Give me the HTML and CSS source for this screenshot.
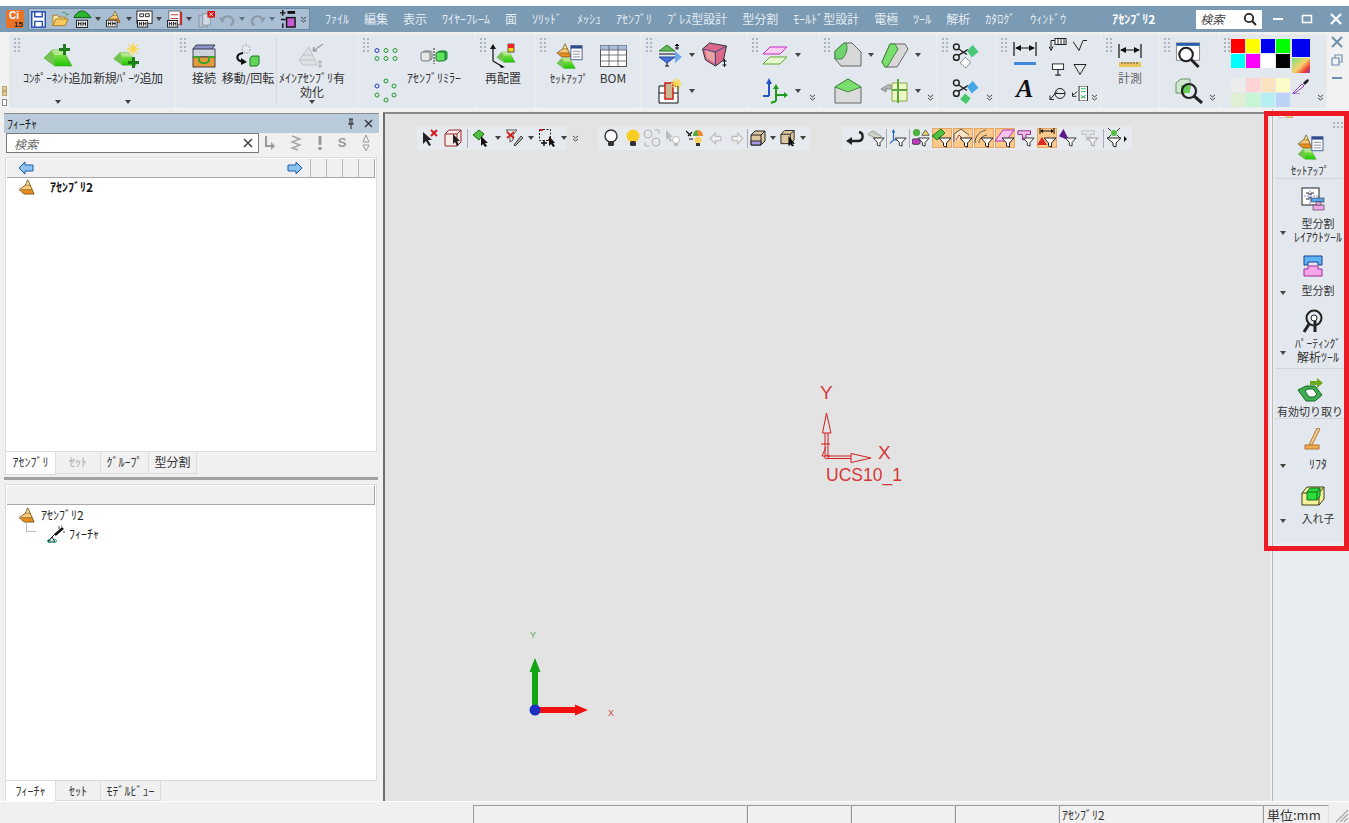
FILE: index.html
```html
<!DOCTYPE html>
<html lang="ja">
<head>
<meta charset="utf-8">
<title>アセンブリ2</title>
<link rel="stylesheet" href="styles.css">
</head>
<body>
<svg class="defs" aria-hidden="true">
<defs>
<linearGradient id="gg" x1="0" y1="0" x2="0" y2="1"><stop offset="0" stop-color="#a6e46c"/><stop offset="1" stop-color="#1fc800"/></linearGradient>
<symbol id="gem" viewBox="0 0 30 20"><path d="M1 11 9 3h11l9 16H12z" fill="url(#gg)" stroke="#3f9a2c" stroke-width=".6"/><path d="M1 11 9 3l3 16z" fill="#74c254"/><path d="M9 3h11l3 5H12z" fill="#b5e58c"/></symbol>
<symbol id="pyr" viewBox="0 0 20 18"><path d="M11 1 14 7H8z" fill="#f7ea9a"/><path d="M8 7h6l2 5H2z" fill="#f9c873"/><path d="M2 12h14l2 5H7z" fill="#e88c1e"/><path d="M11 1 18 17H7L1 12l7-5z" fill="none" stroke="#6d4c12" stroke-width=".9"/><path d="M8 7h6M3 12h13" stroke="#6d4c12" stroke-width=".7"/></symbol>
<symbol id="star" viewBox="0 0 12 12"><path d="M6 0v12M0 6h12M1.800 1.800l8.400 8.400M10.200 1.800l-8.400 8.400" stroke="#f8d848" stroke-width="1.500"/></symbol>
<symbol id="hh" viewBox="0 0 12 8"><rect x=".5" y=".5" width="11" height="7" fill="#fff" stroke="#111"/><path d="M2.500 2v4M5 2v4M2.500 4H5M7 2v4M9.500 2v4M7 4h2.500" stroke="#111"/></symbol>
<symbol id="comp" viewBox="0 0 30 24"><use href="#gem" x="0" y="3" width="30" height="20"/><path d="M20 0h3v4h4v3h-4v4h-3V7h-4V4h4z" fill="#1d7d1d"/></symbol>
<symbol id="newp" viewBox="0 0 30 26"><use href="#gem" x="0" y="7" width="24" height="16"/><use href="#star" x="14" y="0" width="12" height="12"/><path d="M19 14h3v4h4v3h-4v4h-3v-4h-4v-3h4z" fill="#1d7d1d"/></symbol>
<symbol id="conn" viewBox="0 0 24 24"><path d="M1 5 4 1h19l-3 4" fill="#8b93c8" stroke="#223" stroke-width=".8"/><rect x="1" y="5" width="22" height="8" fill="#cdd2df" stroke="#223" stroke-width=".8"/><rect x="1" y="13" width="22" height="10" fill="#e79a3b" stroke="#223" stroke-width=".8"/><path d="M1 13h6v3c0 3 3 3 5 3s5 0 5-3v-3h6" fill="none" stroke="#39a32a" stroke-width="2"/></symbol>
<symbol id="move" viewBox="0 0 26 24"><circle cx="11" cy="5" r="4" fill="none" stroke="#999" stroke-dasharray="2 1.500"/><path d="M8 9C1 10 0 16 8 18" fill="none" stroke="#111" stroke-width="2.200"/><path d="M6 14l6 4-6 3z" fill="#111"/><path d="M15 14l2-2h7v8l-2 2h-7z" fill="#62d65a" stroke="#1c7a1c"/></symbol>
<symbol id="mainasm" viewBox="0 0 26 26"><path d="M10 4 18 22H4L0 17z" fill="#dde1e6" stroke="#bcc2c8"/><path d="M3 12h11M1 17h15" stroke="#bcc2c8"/><path d="M14 8 24 1M14 8l1-4M14 8l4 0" stroke="#9aa0a6" stroke-width="1.500" fill="none"/><path d="M21 17v8M19 19h4M19 23h4" stroke="#aaa"/></symbol>
<symbol id="cir1" viewBox="0 0 24 14"><g fill="none" stroke="#1f9a2f" stroke-width="1"><circle cx="12" cy="3" r="2"/><circle cx="21" cy="3" r="2"/><circle cx="12" cy="11" r="2"/><circle cx="21" cy="11" r="2"/><circle cx="3" cy="11" r="2"/></g><circle cx="3" cy="3" r="2" fill="none" stroke="#2235c4"/></symbol>
<symbol id="cir2" viewBox="0 0 24 26"><g fill="none" stroke="#1f9a2f"><circle cx="12" cy="3" r="2"/><circle cx="20" cy="8" r="2"/><circle cx="20" cy="17" r="2"/><circle cx="12" cy="22" r="2"/><circle cx="3" cy="17" r="2"/></g><circle cx="3" cy="8" r="2" fill="none" stroke="#2235c4"/></symbol>
<symbol id="mirror" viewBox="0 0 28 16"><rect x="3" y="3" width="9" height="9" rx="2" fill="#d8d8d8" stroke="#777"/><rect x="1" y="4" width="9" height="9" rx="2" fill="#e6e6e6" stroke="#777"/><path d="M14 0v16" stroke="#333" stroke-dasharray="2 1"/><rect x="18" y="3" width="9" height="9" rx="2" fill="#2fbf45" stroke="#197a29"/><rect x="16" y="4" width="9" height="9" rx="2" fill="#62e060" stroke="#197a29"/></symbol>
<symbol id="repos" viewBox="0 0 26 24"><path d="M3 17V3M3 17l10 6" stroke="#111" stroke-width="1.200"/><path d="M0 5l3-5 3 5zM9 20l6 3-4 1z" fill="#111"/><use href="#gem" x="6" y="6" width="20" height="13"/><rect x="18" y="0" width="6" height="8" fill="#f4d322" stroke="#222" stroke-width=".7"/><rect x="18" y="0" width="6" height="4" fill="#e22"/></symbol>
<symbol id="setup" viewBox="0 0 30 28"><use href="#pyr" x="0" y="0" width="20" height="16"/><use href="#gem" x="0" y="14" width="24" height="14"/><rect x="17" y="3" width="12" height="15" fill="#fff" stroke="#3c5a8c"/><rect x="17" y="3" width="12" height="3" fill="#2d4a8a"/><path d="M19 9h8M19 12h8M19 15h8" stroke="#889"/></symbol>
<symbol id="bom" viewBox="0 0 27 22"><rect x=".5" y=".5" width="26" height="21" fill="#fff" stroke="#555"/><rect x=".5" y=".5" width="26" height="4.500" fill="#a9bde0"/><path d="M.5 5h26M.5 10h26M.5 16h26M9 .5v21M18 .5v21" stroke="#555" stroke-width=".8"/></symbol>
<symbol id="split" viewBox="0 0 26 26"><path d="M2 9 10 3l8 6z" fill="#63b856" stroke="#2e7d32"/><path d="M2 15 10 21l8-6z" fill="#3f6fd8" stroke="#2a4ca0"/><path d="M2 12h16" stroke="#111"/><path d="M20 2v6M18 4l2-2 2 2M18 6h4M10 21v3M8 24h4" stroke="#111"/><path d="M18 9l7 6-7 6z" fill="#6fa6ee"/></symbol>
<symbol id="cavity" viewBox="0 0 26 26"><path d="M1 7 8 1l17 3-3 14-8 6L4 18z" fill="#d9688b" stroke="#333"/><path d="M1 7l13 3 11-6M14 10l0 14" stroke="#36507e" fill="none"/><path d="M4 8l9 3 0 10L5 16z" fill="#e9a1a1"/><path d="M23 17v8M21 19h4M21 23h4" stroke="#111"/></symbol>
<symbol id="insert" viewBox="0 0 24 26"><path d="M1 8h19v17H1zM1 15h19" fill="#fff" stroke="#111"/><rect x="7" y="5" width="8" height="16" fill="#c9b792" stroke="#d01818" stroke-width="1.500"/><use href="#star" x="13" y="0" width="11" height="11"/></symbol>
<symbol id="planes" viewBox="0 0 26 20"><path d="M1 9l7-7h17l-7 7z" fill="#fbd0f4" stroke="#c22ac2"/><path d="M1 19l7-7h17l-7 7z" fill="#e7f6d0" stroke="#5fae2e"/></symbol>
<symbol id="axes" viewBox="0 0 26 26"><path d="M7 18V3M7 18H1" stroke="#1f55c4" stroke-width="2"/><path d="M4 6l3-6 3 6z" fill="#1f55c4"/><path d="M14 23V9M14 17h10M14 23l-5 2" stroke="#1e9a1e" stroke-width="2"/><path d="M11 11l3-5 3 5zM22 14l4 3-4 3z" fill="#1e9a1e"/></symbol>
<symbol id="f1" viewBox="0 0 28 26"><path d="M10 1h8l9 9v14H7L1 17V9z" fill="#d8d8d8" stroke="#666"/><path d="M1 17V9l9-8h2c3 6-1 13-4 16z" fill="#72d272" stroke="#3d8a3d"/></symbol>
<symbol id="f2" viewBox="0 0 28 26"><path d="M9 2h15l3 5-11 18H4L1 20z" fill="#d8d8d8" stroke="#666"/><path d="M9 2h5l3 5L6 25H4L1 20z" fill="#7ade6e" stroke="#3d8a3d"/></symbol>
<symbol id="f3" viewBox="0 0 28 26"><path d="M14 1 27 9v16H1V9z" fill="#dcdcdc" stroke="#666"/><path d="M14 1 27 9l-13 5L1 9z" fill="#7ade6e" stroke="#3d8a3d"/></symbol>
<symbol id="f4" viewBox="0 0 28 26"><path d="M0 11h10V7l-4 0M0 11l5-3v6z" fill="#bbb" stroke="#888"/><path d="M11 5h15v18H11z" fill="#eef7c8" stroke="#8aa83a"/><path d="M17 1v24M11 12h15" stroke="#5aa83a" stroke-width="2"/></symbol>
<symbol id="sc1" viewBox="0 0 27 27"><circle cx="4" cy="5" r="3" fill="none" stroke="#222" stroke-width="1.500"/><circle cx="4" cy="16" r="3" fill="none" stroke="#222" stroke-width="1.500"/><path d="M6 7l9 6M6 14l10-6" stroke="#222" stroke-width="1.500"/><path d="M15 9l6-6 6 7-7 6z" fill="#48c878"/><path d="M13 16l6 5-5 6-6-5z" fill="#fff" stroke="#555" stroke-dasharray="2 1"/></symbol>
<symbol id="sc2" viewBox="0 0 27 27"><circle cx="4" cy="5" r="3" fill="none" stroke="#222" stroke-width="1.500"/><circle cx="4" cy="16" r="3" fill="none" stroke="#222" stroke-width="1.500"/><path d="M6 7l9 6M6 14l10-6" stroke="#222" stroke-width="1.500"/><path d="M15 9l6-6 6 7-7 6z" fill="#44a8e8"/><path d="M13 16l6 5-5 6-6-5z" fill="#46c86c"/></symbol>
<symbol id="dim" viewBox="0 0 24 24"><path d="M1 0v14M23 0v14M3 6h18" stroke="#111" stroke-width="1.200"/><path d="M2 6l6-3v6zM22 6l-6-3v6z" fill="#111"/><rect x="1" y="20" width="22" height="3" fill="#3d8bd8"/></symbol>
<symbol id="dimr" viewBox="0 0 24 24"><path d="M1 0v14M23 0v14M3 6h18" stroke="#111" stroke-width="1.200"/><path d="M2 6l6-3v6zM22 6l-6-3v6z" fill="#111"/><rect x="1" y="18" width="22" height="5" fill="#e9c55c"/><path d="M4 18v2M7 18v2M10 18v2M13 18v2M16 18v2M19 18v2" stroke="#555"/></symbol>
<symbol id="s1" viewBox="0 0 18 14"><path d="M6 2H2v8M0 8l2 4 2-4" fill="none" stroke="#222"/><rect x="6" y="0" width="11" height="6" fill="#fff" stroke="#222"/><path d="M9 0v6M12 0v6M15 0v6" stroke="#222"/></symbol>
<symbol id="s2" viewBox="0 0 14 12"><path d="M0 2l6 9 4-10h4" fill="none" stroke="#222"/></symbol>
<symbol id="s3" viewBox="0 0 14 14"><rect x="1" y="1" width="12" height="6" fill="#fff" stroke="#222"/><path d="M7 7v6M4 13h6" stroke="#222" stroke-width="1.200"/></symbol>
<symbol id="s4" viewBox="0 0 14 12"><path d="M1 1h12L7 11z" fill="none" stroke="#222"/></symbol>
<symbol id="s5" viewBox="0 0 18 14"><circle cx="11" cy="7" r="5" fill="none" stroke="#222"/><path d="M6 7h10M8 5 1 13M1 9v4h4" fill="none" stroke="#222"/></symbol>
<symbol id="s6" viewBox="0 0 18 16"><path d="M6 6 1 10v0M1 7v4h4" fill="none" stroke="#222"/><rect x="8" y="0" width="9" height="16" fill="#fff" stroke="#222"/><path d="M10 3h5M10 6h5M10 10l5 3M15 10l-5 3" stroke="#2a4" /></symbol>
<symbol id="mag" viewBox="0 0 26 27"><rect x="1" y="1" width="24" height="18" fill="#fff" stroke="#888"/><rect x="1" y="1" width="24" height="3" fill="#2a5fb0"/><circle cx="11" cy="13" r="7" fill="#fff" stroke="#222" stroke-width="2.200"/><path d="M16 18l8 8" stroke="#222" stroke-width="3"/></symbol>
<symbol id="mag2" viewBox="0 0 28 26"><path d="M1 5l5-4h9v10l-5 4H1z" fill="#cfe8cf" stroke="#6b8f6b"/><rect x="6" y="7" width="9" height="8" fill="#66cc55"/><circle cx="14" cy="13" r="7" fill="none" stroke="#222" stroke-width="2.200"/><path d="M19 18l8 7" stroke="#222" stroke-width="3"/></symbol>
<symbol id="drop" viewBox="0 0 18 16"><path d="M1 15l9-9 2 2-9 7z" fill="#fff" stroke="#8a3cc8"/><path d="M11 5l3-3c2-2 4 0 2 2l-3 3z" fill="#222"/><path d="M0 16h8" stroke="#8a3cc8"/></symbol>
<symbol id="dbl" viewBox="0 0 7 7"><path d="M1 1l2.500 2 2.500-2M1 4l2.500 2 2.500-2" fill="none" stroke="#444"/></symbol>
<symbol id="save" viewBox="0 0 16 18"><rect x=".8" y=".8" width="14.400" height="16.400" fill="#fff" stroke="#2850b4" stroke-width="1.600"/><path d="M4 1v5h8V1M4 17v-6h8v6" fill="none" stroke="#2850b4" stroke-width="1.500"/></symbol>
<symbol id="open" viewBox="0 0 18 16"><path d="M1 15V4h5l1 2h7v2" fill="#f7e7a0" stroke="#a87b1e"/><path d="M1 15l3-7h13l-3 7z" fill="#f4cb5c" stroke="#a87b1e"/><path d="M11 1c3 0 4 1 5 3l1-2" fill="none" stroke="#2e9b30"/></symbol>
<symbol id="q1" viewBox="0 0 20 20"><path d="M1 8c2-5 6-7 9-7s6 3 9 7z" fill="#2fb52f" stroke="#0d5a0d"/><use href="#hh" x="3" y="10" width="13" height="9"/></symbol>
<symbol id="q2" viewBox="0 0 20 20"><use href="#pyr" x="2" y="0" width="17" height="14"/><use href="#hh" x="1" y="10" width="13" height="9"/></symbol>
<symbol id="q3" viewBox="0 0 18 20"><rect x="1" y="1" width="16" height="13" fill="#fff" stroke="#222"/><path d="M4 4h4v3H4zM10 4h4v3h-4z" fill="none" stroke="#222"/><use href="#hh" x="1" y="10" width="12" height="9"/></symbol>
<symbol id="q4" viewBox="0 0 18 20"><rect x="3" y="1" width="12" height="14" fill="#fff" stroke="#666"/><path d="M5 5h8M5 9h8" stroke="#b33"/><path d="M16 2v14" stroke="#c22" stroke-width="2"/><use href="#hh" x="1" y="10" width="12" height="9"/></symbol>
<symbol id="q5" viewBox="0 0 18 18"><rect x="1" y="5" width="9" height="12" fill="#b8c6d4" stroke="#8494a4"/><rect x="5" y="3" width="8" height="12" fill="#d0dae4" stroke="#8494a4"/><rect x="10" y="0" width="8" height="7" fill="#d11"/><path d="M12 1.500l4 4M16 1.500l-4 4" stroke="#fff"/></symbol>
<symbol id="q6" viewBox="0 0 18 14"><path d="M4 9C3 3 14 1 15 9c0 2-1 3-3 4" fill="none" stroke="#8d9bab" stroke-width="2.500"/><path d="M0 5l6 0-2 6z" fill="#8d9bab"/></symbol>
<symbol id="q7" viewBox="0 0 18 14"><path d="M14 9C15 3 4 1 3 9c0 2 1 3 3 4" fill="none" stroke="#8d9bab" stroke-width="2.500"/><path d="M18 5l-6 0 2 6z" fill="#8d9bab"/></symbol>
<symbol id="q8" viewBox="0 0 18 20"><path d="M1 3h6M4 0v6M2 10h5M4 14v5" stroke="#111" stroke-width="1.500"/><rect x="9" y="1" width="8" height="3" fill="#111"/><rect x="8" y="8" width="9" height="10" fill="#c65ad0" stroke="#111" stroke-width="1.500"/></symbol>
<symbol id="larr" viewBox="0 0 16 14"><path d="M1 7 7 1v3h8v6H7v3z" fill="#8ec3f0" stroke="#1d5aa8"/></symbol>
<symbol id="rarr" viewBox="0 0 16 14"><path d="M15 7 9 1v3H1v6h8v3z" fill="#8ec3f0" stroke="#1d5aa8"/></symbol>
<symbol id="feat" viewBox="0 0 18 18"><path d="M9 8 1 16M5 12l3 5H1z" stroke="#222" fill="none"/><circle cx="2" cy="16" r="1.500" fill="none" stroke="#2a8"/><circle cx="8" cy="16" r="1.500" fill="none" stroke="#2a8"/><path d="M8 10l8-7" stroke="#111" stroke-width="2.500"/><path d="M12 1v3M16 7h2M14 1h1" stroke="#555"/></symbol>
<symbol id="parting" viewBox="0 0 20 24"><circle cx="11" cy="9" r="7.500" fill="none" stroke="#222" stroke-width="2"/><circle cx="11" cy="9" r="3" fill="#fff" stroke="#222"/><path d="M6 15 1 23" stroke="#222" stroke-width="3"/><path d="M12 12v11" stroke="#222" stroke-width="3"/></symbol>
<symbol id="layout" viewBox="0 0 24 24"><rect x="1" y="1" width="17" height="17" fill="#fff" stroke="#222"/><path d="M9 0v18M0 9h18" stroke="#8888cc" stroke-dasharray="2 1"/><path d="M5 6h3v2M13 6h-3v2M5 12h3v-2M13 12h-3v-2" fill="none" stroke="#333"/><rect x="10" y="11" width="13" height="4" fill="#5aa2ee" stroke="#333" stroke-width=".6"/><rect x="12" y="18" width="11" height="5" fill="#f2a4e8" stroke="#333" stroke-width=".6"/><path d="M15 15h5v3h-5z" fill="#f2a4e8" stroke="#333" stroke-width=".6"/></symbol>
<symbol id="mold" viewBox="0 0 20 22"><path d="M1 1h18v9h-4V7H5v3H1z" fill="#5fb4f8" stroke="#1f3f8a"/><path d="M1 21v-7h4v-3h10v3h4v7z" fill="#f6a6ea" stroke="#a02a90"/></symbol>
<symbol id="cut" viewBox="0 0 26 24"><path d="M13 3h7V0l6 5-6 5V7h-7z" fill="#6ea81e"/><path d="M1 12 9 8h9l7 9-7 6H9z" fill="#3fae4f" stroke="#176a24"/><path d="M8 13l3-2h5l4 5-3 3h-5z" fill="#fff" stroke="#176a24"/></symbol>
<symbol id="lifter" viewBox="0 0 18 22"><path d="M5 17 13 0l3 1-8 16z" fill="#f3cd97" stroke="#b5782e"/><rect x="1" y="17" width="14" height="4" fill="#f2a94d" stroke="#b5782e"/></symbol>
<symbol id="nest" viewBox="0 0 24 22"><path d="M1 9l5-6h17v12l-5 6H1z" fill="#f8f39a" stroke="#3d3d14"/><path d="M1 9h17v12M18 9l5-6" fill="none" stroke="#3d3d14"/><path d="M6 8l3-4h10v8l-3 4H6z" fill="#2edc3a" stroke="#176a24"/><path d="M6 8h10v8M16 8l3-4" fill="none" stroke="#176a24"/></symbol>
<symbol id="cx" viewBox="0 0 18 18"><path d="M2 3v12l3-3 3 5 2-1-3-5h4z" fill="#222"/><path d="M10 1l6 6M16 1l-6 6" stroke="#d21c1c" stroke-width="2"/></symbol>
<symbol id="cb" viewBox="0 0 18 18"><path d="M1 5l4-4h12v12l-4 4H1zM1 5h12v12M13 5l4-4" fill="#f5eaea" stroke="#9a2424"/><path d="M9 5v10l2-2 2 4 2-1-2-4h3z" fill="#222"/></symbol>
<symbol id="cc" viewBox="0 0 18 18"><path d="M0 6 6 1l5 4-5 6z" fill="#4fbf3f" stroke="#216c17"/><path d="M8 7v10l2-2 2 3 2-1-2-3h3z" fill="#111"/></symbol>
<symbol id="cf" viewBox="0 0 18 18"><path d="M0 1h11L7 6v5L4 13V6z" fill="#eee" stroke="#555"/><path d="M1 3l7 6M8 3l-7 6" stroke="#d21c1c" stroke-width="1.800"/><path d="M8 16 15 7l2 2-8 8z" fill="#aaa" stroke="#444"/></symbol>
<symbol id="cs" viewBox="0 0 18 18"><rect x=".5" y=".5" width="11" height="11" fill="none" stroke="#222" stroke-dasharray="2 1.500"/><rect x="1" y="0" width="3" height="2" fill="#d21c1c"/><rect x="9" y="10" width="3" height="2" fill="#d21c1c"/><path d="M2 14h6M5 11v6" stroke="#111" stroke-width="1.500"/><path d="M10 7v10l2-2 2 3 2-1-2-3h2z" fill="#111"/></symbol>
<symbol id="b1" viewBox="0 0 16 18"><circle cx="8" cy="7" r="6" fill="#fff" stroke="#333" stroke-width="1.400"/><rect x="5" y="12" width="6" height="5" rx="1.500" fill="#333"/></symbol>
<symbol id="b2" viewBox="0 0 16 18"><circle cx="8" cy="7" r="6.500" fill="#f8cd24"/><rect x="5" y="12" width="6" height="5" rx="1.500" fill="#333"/></symbol>
<symbol id="b3" viewBox="0 0 18 18"><g fill="#e8e8e8" stroke="#b0b0b0"><circle cx="5" cy="5" r="4"/><circle cx="13" cy="13" r="4"/></g><path d="M12 1h4v4M6 17H2v-4" fill="none" stroke="#b0b0b0"/></symbol>
<symbol id="b4" viewBox="0 0 16 18"><path d="M1 1v10l2-2 2 4 2-1-2-4h3z" fill="#bcbcbc"/><circle cx="11" cy="11" r="3.500" fill="#fff" stroke="#bbb"/><rect x="9" y="14" width="4" height="3" fill="#bbb"/></symbol>
<symbol id="b5" viewBox="0 0 18 18"><path d="M7 7c0-4 3-6 5-6s5 2 5 6z" fill="#f08a2c"/><path d="M7 7c0-4 3-6 4-6l1 6z" fill="#4fb03f"/><circle cx="12" cy="11" r="3.500" fill="#f7d25c"/><rect x="10" y="14" width="4" height="3" fill="#333"/><path d="M0 2l5 5M2 7l4-4M3 10h4" stroke="#111" stroke-width="1.200"/></symbol>
<symbol id="bl" viewBox="0 0 12 12"><path d="M1 6 6 1v3h5v4H6v3z" fill="#eee" stroke="#bbb"/></symbol>
<symbol id="br" viewBox="0 0 12 12"><path d="M11 6 6 1v3H1v4h5v3z" fill="#eee" stroke="#bbb"/></symbol>
<symbol id="bx1" viewBox="0 0 16 16"><path d="M1 5l4-4h10v10l-4 4H1z" fill="#ddc79e" stroke="#222"/><path d="M1 5h10v10M11 5l4-4" fill="none" stroke="#222"/><path d="M1 11h10v4H1z" fill="#a89ae8" stroke="#222"/></symbol>
<symbol id="bx2" viewBox="0 0 17 18"><path d="M1 5l4-4h10v10l-4 4H1z" fill="#ddc79e" stroke="#222"/><path d="M1 5h10v10M11 5l4-4" fill="none" stroke="#222"/><path d="M9 7v11l2-2 2 2 2-1-2-2h3z" fill="#111"/></symbol>
<symbol id="fn" viewBox="0 0 20 20"><path d="M7 10h12l-4.500 5v4l-3 -1v-3z" fill="#fff" stroke="#222"/></symbol>
<symbol id="ret" viewBox="0 0 18 14"><path d="M5 10h7c6 0 6-8 1-9" fill="none" stroke="#222" stroke-width="2.400"/><path d="M0 10l6-4v8z" fill="#222"/></symbol>
<symbol id="t1" viewBox="0 0 20 20"><path d="M1 6l5-4 10 6-4 3z" fill="#d8d8c8" stroke="#999"/><path d="M4 3l8 4M7 2l8 5" stroke="#bbb"/><use href="#fn" width="20" height="20"/></symbol>
<symbol id="t2" viewBox="0 0 20 20"><path d="M5 12V2M5 12 1 16M5 12h5" stroke="#2a66b8" stroke-width="1.300" fill="none"/><path d="M3 4l2-4 2 4z" fill="#2a66b8"/><use href="#fn" width="20" height="20"/></symbol>
<symbol id="t3" viewBox="0 0 20 20"><circle cx="5" cy="4" r="4" fill="#4fb03f"/><path d="M11 7l4-6 4 6z" fill="#f5d35c" stroke="#555"/><rect x="0" y="11" width="9" height="6" rx="2" fill="#c23cc2" stroke="#333"/><use href="#fn" width="20" height="20"/></symbol>
<symbol id="t4" viewBox="0 0 20 20"><path d="M0 8l9-7 4 4-8 7z" fill="#4fc03f" stroke="#1f7a1f"/><use href="#fn" width="20" height="20"/></symbol>
<symbol id="t5" viewBox="0 0 20 20"><path d="M1 14V6l7-5 8 6" fill="#f8e4c0" stroke="#555"/><path d="M3 12l3-5 4 4" fill="none" stroke="#c33"/><use href="#fn" width="20" height="20"/></symbol>
<symbol id="t6" viewBox="0 0 20 20"><path d="M1 15C1 8 6 3 12 2M5 15c0-4 3-7 8-8" fill="none" stroke="#555"/><use href="#fn" width="20" height="20"/></symbol>
<symbol id="t7" viewBox="0 0 20 20"><path d="M0 13 8 2h11l-8 11z" fill="#f7c3f0" stroke="#c02ab8"/><use href="#fn" width="20" height="20"/></symbol>
<symbol id="t8" viewBox="0 0 20 20"><path d="M1 2h14v4h-5v6H6V6H1z" fill="#f0c0e8" stroke="#8a1a8a"/><use href="#fn" width="20" height="20"/></symbol>
<symbol id="t9" viewBox="0 0 20 20"><path d="M3 0v6M17 0v6M4 3h12" stroke="#111"/><path d="M3 3l3-2v4zM17 3l-3-2v4z" fill="#111"/><path d="M0 17l5-8 5 8z" fill="#d82a2a"/><use href="#fn" width="20" height="20"/></symbol>
<symbol id="t10" viewBox="0 0 20 20"><path d="M5 0 0 8l9 4h2z" fill="#5c1a8c"/><use href="#fn" width="20" height="20"/></symbol>
<symbol id="t11" viewBox="0 0 20 20"><g opacity=".45"><path d="M1 2h14v4h-5v6H6V6H1z" fill="#ddd" stroke="#888"/><use href="#fn" width="20" height="20"/></g></symbol>
<symbol id="t12" viewBox="0 0 22 20"><circle cx="9" cy="5" r="3" fill="#4fc03f"/><path d="M3 0l3 3M15 0l-3 3M3 10l3-3M15 10l-3-3" stroke="#333"/><path d="M2 10h14l-5 5v4l-3-1v-3z" fill="#fff" stroke="#222"/><path d="M19 8l3 3-3 3z" fill="#111"/></symbol>
</defs>
</svg>

<div class="app">
  <div class="topgap"></div>

  <header class="title">
    <div class="logo"><span class="logo-c">Ci</span><span class="logo-n">15</span></div>
    <div class="qat">
      <svg class="q16"><use href="#save"/></svg>
      <svg class="q17"><use href="#open"/></svg>
      <span class="q-item"><svg class="q20"><use href="#q1"/></svg><i class="c"></i></span>
      <span class="q-item"><svg class="q19"><use href="#q2"/></svg><i class="c"></i></span>
      <span class="q-item"><svg class="q18"><use href="#q3"/></svg><i class="c"></i></span>
      <span class="q-item qm"><svg class="q18"><use href="#q4"/></svg><i class="c"></i></span>
      <svg class="q18"><use href="#q5"/></svg>
      <span class="q-item"><svg class="q18"><use href="#q6"/></svg><i class="c c-g"></i></span>
      <span class="q-item"><svg class="q18"><use href="#q7"/></svg><i class="c c-g"></i></span>
      <svg class="q18"><use href="#q8"/></svg>
      <svg class="d7"><use href="#dbl"/></svg>
    </div>
    <nav class="menu">
      <span>ﾌｧｲﾙ</span><span>編集</span><span>表示</span><span>ﾜｲﾔｰﾌﾚｰﾑ</span><span>面</span><span>ｿﾘｯﾄﾞ</span><span>ﾒｯｼｭ</span><span>ｱｾﾝﾌﾞﾘ</span><span>ﾌﾟﾚｽ型設計</span><span>型分割</span><span>ﾓｰﾙﾄﾞ型設計</span><span>電極</span><span>ﾂｰﾙ</span><span>解析</span><span>ｶﾀﾛｸﾞ</span><span>ｳｨﾝﾄﾞｳ</span>
    </nav>
    <div class="docname">ｱｾﾝﾌﾞﾘ2</div>
    <div class="tsearch"><span>検索</span><svg class="ts-ic" viewBox="0 0 14 14"><circle cx="6" cy="6" r="4.200" fill="none" stroke="#222" stroke-width="1.800"/><path d="M9 9l4 4" stroke="#222" stroke-width="2"/></svg></div>
    <div class="winbtns">
      <svg viewBox="0 0 12 12"><path d="M1 6h10" stroke="#fff" stroke-width="2"/></svg>
      <svg viewBox="0 0 12 12"><rect x="1.500" y="2.500" width="9" height="7" fill="none" stroke="#fff" stroke-width="1.500"/></svg>
      <svg viewBox="0 0 12 12"><path d="M1 1l10 10M11 1 1 11" stroke="#fff" stroke-width="2.200"/></svg>
    </div>
  </header>

  <section class="ribbon">
    <div class="side-marks"><i class="mk-t"></i><i class="mk-t"></i><i class="mk-w"></i></div>

    <div class="g g1"><i class="grip"></i>
      <div class="tool t71"><svg class="i30"><use href="#comp"/></svg><span class="lb tight">ｺﾝﾎﾟｰﾈﾝﾄ追加</span><i class="c c-end"></i></div>
      <div class="tool t70"><svg class="i30"><use href="#newp"/></svg><span class="lb tight">新規ﾊﾟｰﾂ追加</span><i class="c c-end"></i></div>
    </div>

    <div class="g g2"><i class="grip"></i>
      <div class="tool t34"><svg class="i24"><use href="#conn"/></svg><span class="lb">接続</span></div>
      <div class="tool t54"><svg class="i26"><use href="#move"/></svg><span class="lb">移動/回転</span></div>
      <i class="vsep"></i>
      <div class="tool t68"><svg class="i26"><use href="#mainasm"/></svg><span class="lb">ﾒｲﾝｱｾﾝﾌﾞﾘ有<br>効化</span><i class="c c-end"></i></div>
    </div>

    <div class="g g3"><i class="grip"></i>
      <div class="colic"><svg class="c1"><use href="#cir1"/></svg><svg class="c2"><use href="#cir2"/></svg></div>
      <div class="tool t58"><svg class="i28s"><use href="#mirror"/></svg><span class="lb">ｱｾﾝﾌﾞﾘﾐﾗｰ</span></div>
    </div>

    <div class="g g4"><i class="grip"></i>
      <div class="tool t44"><svg class="i26"><use href="#repos"/></svg><span class="lb">再配置</span></div>
    </div>

    <div class="g g5"><i class="grip"></i>
      <div class="tool t48"><svg class="i28"><use href="#setup"/></svg><span class="lb s11">ｾｯﾄｱｯﾌﾟ</span></div>
      <div class="tool t40"><svg class="i27"><use href="#bom"/></svg><span class="lb">BOM</span></div>
    </div>

    <div class="g g6"><i class="grip"></i>
      <div class="cells c46">
        <span class="cell"><svg class="i26"><use href="#split"/></svg><i class="c"></i></span>
        <span class="cell"><svg class="i27"><use href="#cavity"/></svg></span>
        <span class="cell"><svg class="i26"><use href="#insert"/></svg><i class="c"></i></span>
      </div>
    </div>

    <div class="g g7"><i class="grip"></i>
      <div class="cells c1col">
        <span class="cell"><svg class="i26"><use href="#planes"/></svg><i class="c c7"></i></span>
        <span class="cell"><svg class="i26"><use href="#axes"/></svg><i class="c c7"></i></span>
      </div>
      <svg class="more"><use href="#dbl"/></svg>
    </div>

    <div class="g g8"><i class="grip"></i>
      <div class="cells c47">
        <span class="cell"><svg class="i28"><use href="#f1"/></svg><i class="c"></i></span>
        <span class="cell"><svg class="i28"><use href="#f2"/></svg><i class="c"></i></span>
        <span class="cell"><svg class="i28"><use href="#f3"/></svg></span>
        <span class="cell"><svg class="i28"><use href="#f4"/></svg><i class="c"></i></span>
      </div>
      <svg class="more"><use href="#dbl"/></svg>
    </div>

    <div class="g g9"><i class="grip"></i>
      <div class="cells c1col">
        <span class="cell"><svg class="i27"><use href="#sc1"/></svg></span>
        <span class="cell"><svg class="i27"><use href="#sc2"/></svg></span>
      </div>
      <svg class="more"><use href="#dbl"/></svg>
    </div>

    <div class="g g10"><i class="grip"></i>
      <div class="annobig">
        <svg class="i24"><use href="#dim"/></svg>
        <span class="aglyph">A</span>
      </div>
      <div class="annosm">
        <svg class="sm18"><use href="#s1"/></svg><svg class="sm14"><use href="#s2"/></svg>
        <svg class="sm14"><use href="#s3"/></svg><svg class="sm14"><use href="#s4"/></svg>
        <svg class="sm18"><use href="#s5"/></svg><svg class="sm18"><use href="#s6"/></svg>
      </div>
      <svg class="more"><use href="#dbl"/></svg>
    </div>

    <div class="g g11"><i class="grip"></i>
      <div class="tool t42"><svg class="i24"><use href="#dimr"/></svg><span class="lb lb-l">計測</span></div>
    </div>

    <div class="g g12"><i class="grip"></i>
      <div class="cells c1col">
        <span class="cell"><svg class="i26"><use href="#mag"/></svg></span>
        <span class="cell"><svg class="i28"><use href="#mag2"/></svg></span>
      </div>
      <svg class="more"><use href="#dbl"/></svg>
    </div>

    <div class="g g13"><i class="grip"></i>
      <div class="palette">
        <div class="sw-grid">
          <i class="k-red"></i><i class="k-yel"></i><i class="k-blu"></i><i class="k-grn"></i>
          <i class="k-cya"></i><i class="k-mag"></i><i class="k-whi"></i><i class="k-bla"></i>
        </div>
        <div class="sw-big"><i class="k-blu"></i><i class="k-rb"></i></div>
        <div class="sw-grid sw-low">
          <i class="p1"></i><i class="p2"></i><i class="p3"></i><i class="p4"></i>
          <i class="p5"></i><i class="p6"></i><i class="p7"></i><i class="p8"></i>
        </div>
        <svg class="dropper"><use href="#drop"/></svg>
      </div>
      <svg class="more"><use href="#dbl"/></svg>
    </div>

    <div class="rb-ctrl">
      <svg viewBox="0 0 12 12"><path d="M1 1l10 10M11 1 1 11" stroke="#6d8fb0" stroke-width="2"/></svg>
      <svg viewBox="0 0 12 12"><path d="M1 4h7v7H1zM4 4V1h7v7H8" fill="none" stroke="#6d8fb0" stroke-width="1.200"/></svg>
      <svg viewBox="0 0 12 12"><path d="M1 6h10" stroke="#6d8fb0" stroke-width="2"/></svg>
    </div>
  </section>

  <main class="work">
    <aside class="left">
      <div class="ptitle"><span>ﾌｨｰﾁｬ</span><span class="pt-icons"><svg class="pin" viewBox="0 0 8 11"><path d="M2 1h4M3 1v5M5 1v5M1 6h6M4 6v5" stroke="#222" fill="none"/></svg><svg class="px" viewBox="0 0 9 9"><path d="M1 1l7 7M8 1 1 8" stroke="#333" stroke-width="1.300"/></svg></span></div>
      <div class="searchrow">
        <div class="psearch"><span>検索</span><svg class="px-ic" viewBox="0 0 10 10"><path d="M1 1l8 8M9 1 1 9" stroke="#444" stroke-width="1.600"/></svg></div>
        <div class="ftools">
          <svg viewBox="0 0 14 16"><path d="M3 1v10h6" fill="none" stroke="#9a9a9a" stroke-width="2"/><path d="M8 7l4 4-4 4z" fill="#9a9a9a"/></svg>
          <svg viewBox="0 0 14 16"><path d="M3 1l8 3-8 3 8 3-8 3 6 2" fill="none" stroke="#a6a6a6" stroke-width="1.400"/></svg>
          <svg viewBox="0 0 14 16"><rect x="5.500" y="1" width="3" height="9" rx="1.200" fill="#9a9a9a"/><circle cx="7" cy="13.500" r="1.800" fill="#9a9a9a"/></svg>
          <span class="s-t">S</span>
          <svg viewBox="0 0 14 16"><path d="M7 0 4 7h6zM4 10h6l-3 6z" fill="none" stroke="#9a9a9a"/></svg>
        </div>
      </div>
      <div class="tree-top">
        <div class="hdr hdr-cols">
          <svg class="ar"><use href="#larr"/></svg>
          <svg class="ar ar-r"><use href="#rarr"/></svg>
          <i></i><i></i><i></i><i></i>
        </div>
        <div class="row1"><svg class="pyr18"><use href="#pyr"/></svg><span>ｱｾﾝﾌﾞﾘ2</span></div>
      </div>
      <div class="tabs">
        <span class="tab on">ｱｾﾝﾌﾞﾘ</span><span class="tab off w45">ｾｯﾄ</span><span class="tab w48">ｸﾞﾙｰﾌﾟ</span><span class="tab w47">型分割</span>
      </div>
      <div class="splitter"></div>
      <div class="tree-bot">
        <div class="hdr"></div>
        <div class="node"><svg class="pyr18"><use href="#pyr"/></svg><span>ｱｾﾝﾌﾞﾘ2</span></div>
        <div class="node sub"><i class="conn"></i><svg class="feat"><use href="#feat"/></svg><span>ﾌｨｰﾁｬ</span></div>
      </div>
      <div class="tabs tabs-b">
        <span class="tab on">ﾌｨｰﾁｬ</span><span class="tab w45">ｾｯﾄ</span><span class="tab w60">ﾓﾃﾞﾙﾋﾞｭｰ</span>
      </div>
    </aside>

    <section class="view">
      <div class="vt vt1">
        <svg class="v18"><use href="#cx"/></svg><svg class="v18"><use href="#cb"/></svg><i class="vs"></i>
        <span class="vi"><svg class="v18"><use href="#cc"/></svg><i class="c"></i></span>
        <span class="vi"><svg class="v18"><use href="#cf"/></svg><i class="c"></i></span>
        <span class="vi"><svg class="v18"><use href="#cs"/></svg><i class="c"></i></span>
        <svg class="d7"><use href="#dbl"/></svg>
      </div>
      <div class="vt vt2">
        <svg class="v16"><use href="#b1"/></svg>
        <svg class="v16 ml6"><use href="#b2"/></svg>
        <svg class="v18 ml2"><use href="#b3"/></svg>
        <svg class="v16 ml4"><use href="#b4"/></svg>
        <svg class="v18 ml5"><use href="#b5"/></svg>
        <svg class="v12 ml5"><use href="#bl"/></svg>
        <svg class="v12 ml9"><use href="#br"/></svg>
        <i class="vs ml3"></i>
        <span class="vi ml2"><svg class="v16"><use href="#bx1"/></svg><i class="c"></i></span>
        <span class="vi ml4"><svg class="v16"><use href="#bx2"/></svg><i class="c"></i></span>
      </div>
      <div class="vt vt3">
        <svg class="v18"><use href="#ret"/></svg>
        <svg class="v18 ml3"><use href="#t1"/></svg>
        <i class="vs ml1"></i>
        <svg class="v18 ml2"><use href="#t2"/></svg>
        <i class="vs ml2"></i>
        <svg class="v18 ml2"><use href="#t3"/></svg>
        <svg class="v20 hl ml2"><use href="#t4"/></svg>
        <svg class="v20 hl ml1"><use href="#t5"/></svg>
        <svg class="v20 hl ml1"><use href="#t6"/></svg>
        <svg class="v20 hl ml1"><use href="#t7"/></svg>
        <svg class="v18 ml2"><use href="#t8"/></svg>
        <svg class="v20 hl ml2"><use href="#t9"/></svg>
        <svg class="v18 ml2"><use href="#t10"/></svg>
        <svg class="v18 ml4"><use href="#t11"/></svg>
        <i class="vs ml4"></i>
        <svg class="v22 ml1"><use href="#t12"/></svg>
      </div>

      <svg class="scene" viewBox="385 115 885 686">
        <g fill="none" stroke="#d21f1f">
          <path d="M826.500 414 822.500 434H831zM825 434v22M828 434v22M821 445h9M826 448l-4 9h8"/>
          <circle cx="826.500" cy="458" r="1.800"/>
          <path d="M828 457h23M828 459.500h23M851 454.500v9l20-4.500z"/>
        </g>
        <g class="ucs">
          <text class="axl" x="820" y="400">Y</text>
          <text class="axl" x="878" y="460">X</text>
          <text x="826" y="482">UCS10_1</text>
        </g>
        <path d="M532 711V673h-2.500L535 659l5.500 14H538v38z" fill="#12a412"/>
        <path d="M535 708h40v-2.500l13 5.500-13 5.500v-2.500h-40z" fill="#f01010"/>
        <circle cx="535" cy="711" r="5.500" fill="#1c2fc0"/>
        <text class="ty" x="530" y="639">Y</text>
        <text class="tx" x="608" y="717">X</text>
      </svg>
    </section>

    <div class="strip"></div>

    <aside class="right">
      <div class="rmarks"><i></i><i></i></div>
      <div class="rgrp">
        <i class="rgrip"></i>
        <div class="st st-a sep"><svg class="i28"><use href="#setup"/></svg><span class="lb s11">ｾｯﾄｱｯﾌﾟ</span></div>
        <div class="st st-b"><svg class="i24 nudge"><use href="#layout"/></svg><div class="st-row"><i class="c"></i><span class="lb">型分割<br><small>ﾚｲｱｳﾄﾂｰﾙ</small></span></div></div>
        <div class="st st-c"><svg class="i22 nudge"><use href="#mold"/></svg><div class="st-row"><i class="c"></i><span class="lb">型分割</span></div></div>
        <div class="st st-d sep"><svg class="i24 nudge"><use href="#parting"/></svg><div class="st-row"><i class="c"></i><span class="lb"><small class="s-p">ﾊﾟｰﾃｨﾝｸﾞ</small><br><small>解析ﾂｰﾙ</small></span></div></div>
        <div class="st st-e sep"><svg class="i26"><use href="#cut"/></svg><span class="lb">有効切り取り</span></div>
        <div class="st st-f"><svg class="i22 nudge"><use href="#lifter"/></svg><div class="st-row"><i class="c"></i><span class="lb"><small>ﾘﾌﾀ</small></span></div></div>
        <div class="st st-g"><svg class="i24 nudge"><use href="#nest"/></svg><div class="st-row"><i class="c"></i><span class="lb">入れ子</span></div></div>
      </div>
    </aside>
    <div class="redbox"></div>
  </main>

  <footer class="status">
    <div class="sc sc0"></div>
    <div class="sc b w274"></div>
    <div class="sc b w104"></div>
    <div class="sc b w104"></div>
    <div class="sc b w104"></div>
    <div class="sc b w204 txt">ｱｾﾝﾌﾞﾘ2</div>
    <div class="sc b w66 unit">単位:mm</div>
    <svg class="gripper" viewBox="0 0 14 14"><path d="M1 13 13 1M5 13l8-8M9 13l4-4" stroke="#a8a8a8" stroke-width="1.200"/></svg>
  </footer>
</div>
</body>
</html>
```

FILE: styles.css
```css
* { box-sizing: border-box; }
html, body { margin: 0; padding: 0; }
body { background: #fff; font-family: "Noto Sans CJK JP", "Liberation Sans", sans-serif; color: #333; overflow: hidden; }
svg { display: block; flex: none; }
i { font-style: normal; }
.defs { position: absolute; width: 0; height: 0; }
.app { width: 1349px; height: 823px; display: flex; flex-direction: column; overflow: hidden; position: relative; }
.topgap { height: 6px; flex: none; background: #fff; }

/* carets */
.c { display: inline-block; flex: none; width: 0; height: 0; border: 3px solid transparent; border-top: 4px solid #444; border-bottom: 0; }
.c-g { border-top-color: #5e7488; }
.c-end { margin-top: auto; margin-bottom: 3px; }
.c7 { margin-left: 1px; }
.d7 { width: 7px; height: 7px; }

/* title bar */
.title { height: 26px; flex: none; background: #7b9ab3; display: flex; align-items: center; color: #e4ecf2; font-size: 12px; line-height: 16px; }
.logo { width: 18px; height: 18px; margin-left: 6px; background: #e8742a; border-radius: 2px; color: #fff; font: bold 10px/10px "Liberation Sans", sans-serif; flex: none; }
.logo-c { display: block; padding: 1px 0 0 3px; }
.logo-n { display: block; text-align: right; color: #222; font-size: 8px; line-height: 7px; padding-right: 1px; }
.qat { width: 282px; height: 22px; margin-left: 4px; background: #a9bed3; border: 1px solid #6c8aa4; display: flex; align-items: center; gap: 4px; padding-left: 2px; flex: none; }
.q-item { display: flex; align-items: center; gap: 3px; }
.qm { margin-right: 2px; }
.q16 { width: 15px; height: 17px; }
.q17 { width: 17px; height: 16px; margin-left: 2px; }
.q18 { width: 17px; height: 19px; }
.q19 { width: 18px; height: 19px; }
.q20 { width: 19px; height: 19px; }
.menu { display: flex; gap: 15px; margin-left: 15px; white-space: nowrap; flex: none; }
.docname { margin-left: 46px; font-weight: 700; color: #fff; width: 43px; white-space: nowrap; flex: none; }
.tsearch { margin-left: 41px; width: 66px; height: 19px; background: #fff; color: #444; font-style: italic; font-size: 12px; display: flex; align-items: center; justify-content: space-between; padding: 0 5px 0 4px; flex: none; }
.ts-ic { width: 14px; height: 14px; }
.winbtns { display: flex; gap: 17px; margin-left: 10px; }
.winbtns svg { width: 12px; height: 12px; }

/* ribbon */
.ribbon { height: 77px; flex: none; background: #f1f1f1; display: flex; gap: 2px; padding: 3px 0 0 0; position: relative; }
.side-marks { width: 8px; flex: none; display: flex; flex-direction: column; padding: 51px 0 0 2px; }
.mk-t { width: 5px; height: 5px; background: #e2cc96; border: 1px solid #b9a66c; }
.mk-w { width: 5px; height: 7px; margin-top: 3px; background: #fff; border: 1px solid #8a8a8a; }
.g { height: 72px; background: #e3e8ee; border-radius: 2px; display: flex; position: relative; flex: none; box-shadow: 0 0 0 .5px #dfe3e8; }
.grip { position: absolute; left: 4px; top: 3px; width: 6px; height: 14px; background-color: #aeb5bd; background-image: repeating-linear-gradient(90deg, transparent 0 2px, #e3e8ee 2px 4px), repeating-linear-gradient(0deg, transparent 0 2px, #e3e8ee 2px 4px); }
.more { position: absolute; right: 2px; bottom: 6px; width: 7px; height: 7px; }
.g1 { width: 164px; padding-left: 12px; }
.g2 { width: 181px; padding-left: 11px; }
.g3 { width: 115px; padding-left: 8px; }
.g4 { width: 58px; padding-left: 5px; }
.g5 { width: 104px; padding-left: 9px; }
.g6 { width: 104px; padding-left: 15px; }
.g7 { width: 70px; padding-left: 14px; }
.g8 { width: 116px; padding-left: 14px; }
.g9 { width: 57px; padding-left: 14px; }
.g10 { width: 103px; padding-left: 16px; }
.g11 { width: 56px; padding-left: 7px; }
.g12 { width: 58px; padding-left: 15px; }
.g13 { width: 106px; padding-left: 11px; }
.tool { height: 72px; padding-top: 6px; display: flex; flex-direction: column; align-items: center; flex: none; }
.tool > svg { height: 30px; padding: 1px 0; }
.t71 { width: 71px; } .t70 { width: 70px; } .t34 { width: 34px; } .t54 { width: 54px; } .t68 { width: 68px; }
.t58 { width: 58px; } .t44 { width: 44px; } .t48 { width: 48px; } .t40 { width: 40px; } .t42 { width: 42px; }
.lb { font-size: 12px; line-height: 14px; text-align: center; white-space: nowrap; color: #333; }
.lb small { font-size: 12px; }
.lb small.s-p { font-size: 11.500px; }
.tight { letter-spacing: -.35px; }
.s11 { font-size: 11px; }
.lb-l { color: #666; }
.vsep { width: 1px; height: 66px; margin: 3px 1px 0 1px; background: #d4d9df; flex: none; }
.i22 { width: 22px; height: 22px; } .i24 { width: 24px; height: 24px; } .i26 { width: 26px; height: 26px; } .i27 { width: 27px; height: 26px; }
.i28 { width: 28px; height: 26px; } .i28s { width: 28px; height: 16px; } .i30 { width: 30px; height: 25px; }
.colic { width: 38px; display: flex; flex-direction: column; align-items: center; padding-top: 12px; gap: 16px; flex: none; }
.c1 { width: 24px; height: 15px; } .c2 { width: 24px; height: 26px; }
.cells { display: grid; grid-auto-rows: 36px; padding-top: 2px; }
.c46 { grid-template-columns: 44px 30px; }
.c47 { grid-template-columns: 47px 40px; }
.c1col { grid-template-columns: 1fr; }
.cell { display: flex; align-items: center; gap: 6px; }
.annobig { width: 33px; display: flex; flex-direction: column; padding-top: 7px; flex: none; }
.aglyph { font: italic bold 26px/24px "Liberation Serif", serif; color: #111; margin: 11px 0 0 3px; }
.annosm { display: grid; grid-template-columns: 24px 20px; grid-auto-rows: 24px; margin-top: -2px; align-items: center; justify-items: center; height: 72px; }
.sm18 { width: 18px; height: 15px; } .sm14 { width: 14px; height: 13px; }
.palette { display: grid; grid-template-columns: 60px 20px; grid-template-rows: 36px 32px; column-gap: 1px; row-gap: 3px; padding-top: 4px; }
.sw-grid { display: grid; grid-template-columns: repeat(4, 14px); grid-auto-rows: 14px; gap: 1px; }
.sw-big { display: flex; flex-direction: column; gap: 1px; }
.sw-big .k-blu { height: 18px; width: 18px; } .sw-big .k-rb { height: 15px; width: 18px; }
.dropper { width: 18px; height: 16px; }
.k-red { background: #f00; } .k-yel { background: #ff0; } .k-blu { background: #0000f0; } .k-grn { background: #0f0; }
.k-cya { background: #0ff; } .k-mag { background: #f0f; } .k-whi { background: #fff; } .k-bla { background: #000; }
.k-rb { background: linear-gradient(135deg, #7be07b, #f6d36c 50%, #e33 80%, #7a4bc8); }
.p1 { background: #ececec; } .p2 { background: #fdd3d3; } .p3 { background: #fbe3c0; } .p4 { background: #fdfcc8; }
.p5 { background: #deefd2; } .p6 { background: #c8f6d5; } .p7 { background: #b4eef2; } .p8 { background: #bdd2f7; }
.rb-ctrl { display: flex; flex-direction: column; gap: 6px; margin-left: 3px; padding-top: 1px; }
.rb-ctrl svg { width: 12px; height: 12px; }

/* work area */
.work { height: 692px; flex: none; display: flex; background: #f0f0f0; position: relative; }
.left { width: 383px; flex: none; display: flex; flex-direction: column; padding-top: 4px; }
.ptitle { height: 20px; margin-left: 4px; width: 375px; flex: none; background: #b9cadb; border-top: 1px solid #8c8c8c; display: flex; justify-content: space-between; align-items: center; padding: 0 6px 0 3px; font-size: 12px; color: #222; }
.pt-icons { display: flex; gap: 9px; align-items: center; }
.pin { width: 8px; height: 11px; }
.px { width: 9px; height: 9px; }
.searchrow { height: 24px; margin-left: 6px; flex: none; display: flex; }
.psearch { width: 253px; height: 20px; background: #fff; border: 1px solid #7a7a7a; display: flex; justify-content: space-between; align-items: center; padding: 0 5px 0 7px; font-style: italic; font-size: 12px; color: #666; flex: none; }
.px-ic { width: 10px; height: 10px; }
.ftools { display: flex; align-items: center; height: 20px; padding-left: 4px; gap: 8px; }
.ftools svg { width: 14px; height: 16px; }
.ftools > :nth-child(2) { margin-left: 4px; }
.ftools > :nth-child(3) { margin-left: 2px; }
.ftools > :nth-child(5) { margin-left: 2px; }
.s-t { width: 14px; font: bold 13px/16px "Liberation Sans", sans-serif; color: #9a9a9a; text-align: center; }
.tree-top, .tree-bot { margin-left: 5px; width: 372px; background: #fff; border: 1px solid #dcdcdc; padding: 1px 1px 0 1px; flex: none; }
.tree-top { height: 295px; }
.tree-bot { height: 297px; }
.hdr { height: 19px; background: #f0f0f0; border-bottom: 1px solid #a8a8a8; border-right: 1px solid #a8a8a8; display: flex; align-items: center; }
.hdr-cols i { width: 16px; height: 100%; border-left: 1px solid #b8b8b8; flex: none; }
.ar { width: 16px; height: 14px; margin-left: 11px; margin-right: 253px; }
.ar.ar-r { margin-left: 0; margin-right: 7px; }
.row1 { display: flex; align-items: center; gap: 14px; padding: 1px 0 0 11px; font-size: 12px; color: #111; font-weight: 700; line-height: 16px; }
.pyr18 { width: 18px; height: 16px; }
.tabs { display: flex; height: 25px; flex: none; margin-left: 5px; }
.tab { width: 50px; height: 22px; background: #f0f0f0; border: 1px solid #dcdcdc; border-top: 0; border-left: 0; font-size: 12px; line-height: 20px; text-align: center; color: #333; flex: none; }
.tab.on { background: #fff; width: 51px; height: 23px; border-left: 1px solid #dcdcdc; }
.tab.off { color: #aaa; }
.w45 { width: 45px; } .w48 { width: 48px; } .w47 { width: 48px; } .w60 { width: 60px; }
.splitter { height: 3px; margin-left: 4px; width: 374px; background: #a2a2a2; flex: none; margin-bottom: 4px; }
.node { display: flex; align-items: center; gap: 5px; padding: 2px 0 0 11px; font-size: 12px; line-height: 16px; color: #222; }
.node.sub { padding: 2px 0 0 40px; position: relative; gap: 4px; }
.conn { position: absolute; left: 19px; top: -1px; width: 10px; height: 10px; border-left: 1px solid #bbb; border-bottom: 1px solid #bbb; }
.feat { width: 18px; height: 18px; }
.tabs-b { height: 21px; }
.tabs-b .tab { height: 20px; }
.tabs-b .tab.on { height: 21px; }

.view { width: 887px; flex: none; margin-top: 3px; height: 689px; background: #e3e3e3; border-left: 2px solid #6e6e6e; border-top: 2px solid #8a8a8a; position: relative; }
.vt { position: absolute; top: 12px; height: 24px; background: #e6e9ee; display: flex; align-items: center; border-radius: 2px; }
.vt1 { left: 32px; width: 149px; padding-left: 4px; gap: 5px; }
.vt2 { left: 213px; width: 212px; padding-left: 5px; }
.vt3 { left: 457px; width: 290px; padding-left: 4px; }
.vi { display: flex; align-items: center; gap: 4px; }
.vs { width: 1px; height: 19px; background: #aab; flex: none; }
.ml1 { margin-left: 1px; } .ml2 { margin-left: 2px; } .ml3 { margin-left: 3px; } .ml4 { margin-left: 4px; } .ml5 { margin-left: 5px; } .ml6 { margin-left: 6px; } .ml9 { margin-left: 9px; }
.v12 { width: 13px; height: 13px; } .v16 { width: 16px; height: 18px; } .v18 { width: 18px; height: 18px; }
.v20 { width: 20px; height: 20px; } .v22 { width: 22px; height: 20px; }
.hl { background: #fcc98a; box-shadow: 0 0 0 1px #e5a766 inset; }
.scene { position: absolute; left: 0; top: 0; width: 885px; height: 686px; }
.ucs { font: 17.500px "Liberation Sans", sans-serif; fill: #d6383a; }
.axl { font-size: 19px; }
.ty { font: 9px "Liberation Sans", sans-serif; fill: #5fa85f; }
.tx { font: 9px "Liberation Sans", sans-serif; fill: #d04c4c; }

.strip { width: 3px; flex: none; background: #f0f0f0; border-right: 1px solid #b9b9b9; }
.right { width: 76px; flex: none; background: #e8edf2; padding: 4px 4px 0 2px; }
.rmarks { display: flex; gap: 1px; height: 5px; padding-left: 3px; }
.rmarks i { width: 7px; height: 5px; background: #fff; border: 1px solid #c9c9c9; }
.rmarks i + i { background: #f2cf9c; border-color: #d9ad6e; }
.rgrp { position: relative; height: 425px; background: #e3e8ee; display: flex; flex-direction: column; padding-top: 11px; }
.rgrip { position: absolute; right: 2px; top: 4px; width: 10px; height: 6px; background-color: #aeb5bd; background-image: repeating-linear-gradient(90deg, transparent 0 2px, #e3e8ee 2px 4px), repeating-linear-gradient(0deg, transparent 0 2px, #e3e8ee 2px 4px); }
.st { display: flex; flex-direction: column; align-items: center; flex: none; }
.st.sep { border-bottom: 1px solid #d2d7dd; }
.st .lb { line-height: 13px; color: #333; font-size: 11px; }
.st-row { display: flex; width: 100%; align-items: center; justify-content: center; position: relative; padding-left: 16px; }
.st-row .c { position: absolute; left: 5px; top: 50%; }
.nudge { margin-left: 5px; }
.st-a { height: 50px; padding-top: 5px; }
.st-a .lb { margin-top: 4px; }
.st-b { height: 69px; padding-top: 8px; }
.st-b .st-row { margin-top: 6px; }
.st-c { height: 54px; padding-top: 7px; }
.st-c .st-row { margin-top: 7px; }
.st-d { height: 67px; padding-top: 7px; }
.st-d .st-row { margin-top: 4px; }
.st-e { height: 50px; padding-top: 8px; }
.st-e .lb { margin-top: 2px; }
.st .st-e-lb { font-size: 10px; }
.st-f { height: 56px; padding-top: 9px; }
.st-f .st-row { margin-top: 7px; }
.st-g { height: 54px; padding-top: 8px; }
.st-g .st-row { margin-top: 5px; }
.redbox { position: absolute; left: 1264px; top: 2px; width: 85px; height: 440px; border: 5px solid #ed1c24; border-left-width: 4px; }

/* status */
.status { height: 22px; flex: none; background: #f0f0f0; border-top: 1px solid #fff; display: flex; padding-top: 3px; position: relative; }
.sc { height: 18px; flex: none; font-size: 12px; line-height: 17px; color: #333; }
.sc0 { width: 473px; }
.b { border-top: 1px solid #9c9c9c; border-left: 1px solid #9c9c9c; border-right: 1px solid #e0e0e0; }
.w274 { width: 274px; } .w104 { width: 104px; } .w204 { width: 204px; } .w66 { width: 66px; }
.txt { padding-left: 2px; }
.unit { font-size: 13px; padding-left: 3px; }
.gripper { width: 14px; height: 14px; margin: 4px 0 0 6px; }
```
